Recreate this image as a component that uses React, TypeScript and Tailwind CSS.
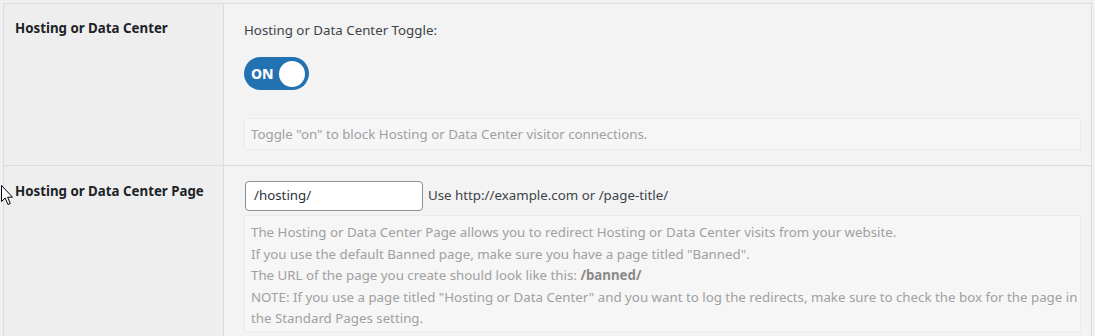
import React from "react";

const font = { fontFamily: '"Segoe UI", "Noto Sans", "Liberation Sans", sans-serif' };

function Cursor() {
  return (
    <svg
      className="absolute left-[1px] top-[185px]"
      width="13"
      height="21"
      viewBox="0 0 13 21"
    >
      <path
        d="M0.5 0.5 L0.5 16.5 L4.2 13 L7 19.5 L9.3 18.5 L6.6 12.2 L11.5 12.2 Z"
        fill="#ffffff"
        stroke="#000000"
        strokeWidth="1"
        strokeLinejoin="round"
      />
    </svg>
  );
}

export default function App() {
  return (
    <div
      className="relative w-[1095px] h-[336px] overflow-hidden bg-[#f0f0f1] pl-[3px] pt-[3px] text-[13.3px]"
      style={font}
    >
      <div className="w-[1089px] border-l border-t border-r border-[#dcdcde]">
        {/* Row 1 */}
        <div className="flex border-b border-[#dcdcde]">
          <div className="w-[220px] shrink-0 bg-[#eeeeee] border-r border-[#dcdcde] pl-[11px] pt-[14px] font-bold text-[#1d2327] leading-[20px]">
            Hosting or Data Center
          </div>
          <div className="flex-1 bg-[#f3f3f3] pl-[20px] pr-[10px] pt-[16px] pb-[15px]">
            <div className="text-[#3c434a] leading-[20px]">Hosting or Data Center Toggle:</div>
            <div className="mt-[17px] w-[65px] h-[33px] rounded-full bg-[#2271b1] flex items-center justify-between pl-[7px] pr-[4px]">
              <span className="text-white font-extrabold text-[14px] leading-none">ON</span>
              <span className="w-[26px] h-[26px] rounded-full bg-white" />
            </div>
            <div className="mt-[28px] bg-[#f6f6f6] border border-[#ebebeb] px-[6px] py-[5px] leading-[20px] text-[#a0a0a0]">
              Toggle "on" to block Hosting or Data Center visitor connections.
            </div>
          </div>
        </div>
        {/* Row 2 */}
        <div className="flex">
          <div className="w-[220px] shrink-0 bg-[#eeeeee] border-r border-[#dcdcde] pl-[11px] pt-[15px] h-[170px] font-bold text-[#1d2327] leading-[20px]">
            Hosting or Data Center Page
          </div>
          <div className="flex-1 bg-[#f3f3f3] pl-[20px] pr-[10px] pt-[15px]">
            <div className="flex items-center">
              <div className="w-[178px] h-[30px] ml-[1px] bg-white border border-[#8c8f94] rounded-[4px] flex items-center px-[8px] text-[#2c3338]">
                /hosting/
              </div>
              <span className="ml-[5px] text-[#3c434a]">Use http://example.com or /page-title/</span>
            </div>
            <div className="mt-[4px] bg-[#f6f6f6] border border-[#ebebeb] pl-[6px] pr-[1px] pt-[6px] pb-[1px] leading-[21.5px] text-[#a0a0a0]">
              <div>The Hosting or Data Center Page allows you to redirect Hosting or Data Center visits from your website.</div>
              <div>If you use the default Banned page, make sure you have a page titled "Banned".</div>
              <div>
                The URL of the page you create should look like this: <b className="text-[#8a8a8a]">/banned/</b>
              </div>
              <div>
                NOTE: If you use a page titled "Hosting or Data Center" and you want to log the redirects, make sure to check the box for the page in the Standard Pages setting.
              </div>
            </div>
          </div>
        </div>
      </div>
      <Cursor />
    </div>
  );
}
